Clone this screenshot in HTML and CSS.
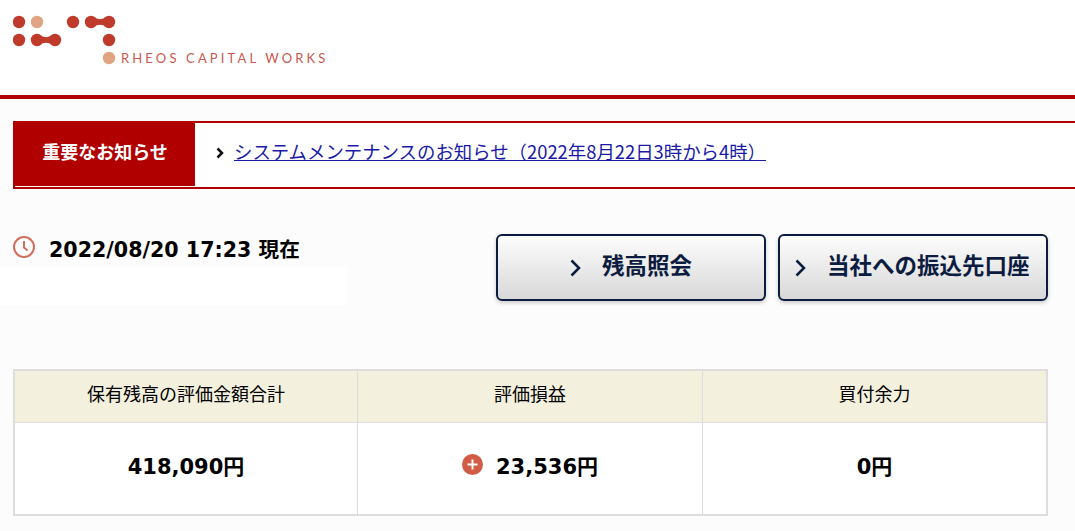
FILE: index.html
```html
<!DOCTYPE html>
<html lang="ja">
<head>
    <meta charset="UTF-8">
    <meta name="viewport" content="width=device-width, initial-scale=1.0">
    <title>RHEOS CAPITAL WORKS</title>
    <link rel="stylesheet" href="styles.css">
</head>
<body>

<header class="header">
    <div class="logo">
        <svg class="logo-mark" width="104" height="54" viewBox="0 0 104 54">
            <g fill="#c03a2b">
                <circle cx="6" cy="7" r="6.200"/>
                <circle cx="60" cy="7" r="6.200"/>
                <circle cx="78" cy="7" r="6.200"/>
                <circle cx="96" cy="7" r="6.200"/>
                <path d="M78 1q9 6.500 18 0v12q-9-6.500-18 0z"/>
                <circle cx="6" cy="25" r="6.200"/>
                <circle cx="24" cy="25" r="6.200"/>
                <circle cx="42" cy="25" r="6.200"/>
                <path d="M24 19q9 6.500 18 0v12q-9-6.500-18 0z"/>
                <circle cx="96" cy="25" r="6.200"/>
            </g>
            <circle cx="24" cy="7" r="6.200" fill="#e0a483"/>
            <circle cx="96" cy="43" r="6.200" fill="#e0a483"/>
        </svg>
        <span class="logo-text">RHEOS CAPITAL WORKS</span>
    </div>
</header>

<section class="notice">
    <h2 class="notice-label">重要なお知らせ</h2>
    <p class="notice-body">
        <svg class="notice-arrow" width="8" height="12" viewBox="0 0 8 12"><path d="M1.500 1.500 6 6l-4.500 4.500" fill="none" stroke="#111" stroke-width="2.500"/></svg>
        <a href="#">システムメンテナンスのお知らせ（2022年8月22日3時から4時）</a>
    </p>
</section>

<section class="status">
    <div class="status-left">
        <p class="time">
            <svg width="22" height="22" viewBox="0 0 22 22"><circle cx="11" cy="11" r="10" fill="none" stroke="#d2705f" stroke-width="2"/><path d="M11 5v6.500l3.500 3" fill="none" stroke="#d2705f" stroke-width="2"/></svg>
            <span>2022/08/20 17:23 現在</span>
        </p>
        <div class="status-blank"></div>
    </div>
    <div class="buttons">
        <a class="button button-center" href="#">
            <svg width="11" height="18" viewBox="0 0 11 18"><path d="M1.500 1.500 9 9l-7.500 7.500" fill="none" stroke="#0c1c40" stroke-width="2.500"/></svg>
            残高照会
        </a>
        <a class="button" href="#">
            <svg width="11" height="18" viewBox="0 0 11 18"><path d="M1.500 1.500 9 9l-7.500 7.500" fill="none" stroke="#0c1c40" stroke-width="2.500"/></svg>
            当社への振込先口座
        </a>
    </div>
</section>

<table class="summary">
    <tr>
        <th class="col-first">保有残高の評価金額合計</th>
        <th class="col-second">評価損益</th>
        <th>買付余力</th>
    </tr>
    <tr>
        <td>418,090円</td>
        <td>
            <span class="amount">
                <svg width="21" height="21" viewBox="0 0 21 21"><circle cx="10.500" cy="10.500" r="10.500" fill="#d15c46"/><path d="M5.500 10.500h10M10.500 5.500v10" stroke="#fff" stroke-width="2"/></svg>
                23,536円
            </span>
        </td>
        <td>0円</td>
    </tr>
</table>

</body>
</html>
```

FILE: styles.css
```css
body {
    margin: 0;
    background: #fcfcfc;
    color: #000;
    font-family: "DejaVu Sans", "Noto Sans CJK JP", sans-serif;
    overflow: hidden;
}
.header {
    height: 95px;
    background: #fff;
    border-bottom: 4px solid #b00000;
}
.logo {
    position: relative;
    padding: 15px 0 0 13px;
}
.logo-mark {
    display: block;
}
.logo-text {
    position: absolute;
    left: 121px;
    top: 50px;
    color: #c9584f;
    font-family: "Lato", sans-serif;
    font-size: 13px;
    letter-spacing: 3.150px;
    white-space: nowrap;
}
.notice {
    display: flex;
    height: 64px;
    margin: 22px 0 0 13px;
    background: #fff;
    border-top: 2px solid #b00000;
    border-bottom: 2px solid #b00000;
    border-left: 2px solid #b00000;
}
.notice-label {
    width: 180px;
    height: 63px;
    margin: 0;
    background: #b00000;
    color: #fff;
    font-family: "Noto Sans CJK JP", sans-serif;
    font-size: 18px;
    font-weight: 700;
    line-height: 56px;
    text-align: center;
}
.notice-body {
    display: flex;
    align-items: center;
    gap: 10px;
    margin: 0;
    padding: 0 0 9px 21px;
    font-family: "Noto Sans CJK JP", sans-serif;
    font-size: 18.400px;
}
.notice-arrow {
    margin-top: 5px;
}
.notice-body a {
    color: #1a1aa6;
}
.status {
    display: flex;
    justify-content: space-between;
    margin-top: 45px;
    padding-right: 27px;
}
.status-left {
    width: 347px;
}
.time {
    display: flex;
    align-items: center;
    gap: 14px;
    box-sizing: border-box;
    height: 32px;
    margin: 0;
    padding: 0 0 6px 13px;
    font-size: 20.600px;
    font-weight: 700;
}
.time span {
    margin-top: 1px;
}
.status-blank {
    height: 39px;
    background: #fff;
}
.buttons {
    display: flex;
    gap: 12px;
}
.button {
    display: flex;
    align-items: center;
    gap: 21px;
    box-sizing: border-box;
    width: 270px;
    height: 67px;
    padding: 0 0 8px 15px;
    border: 2px solid #0c1c40;
    border-radius: 6px;
    background: linear-gradient(#fdfdfd, #d8d8d8);
    box-shadow: 0 2px 4px rgba(0, 0, 0, 0.2);
    color: #0c1c40;
    font-family: "Noto Sans CJK JP", sans-serif;
    font-size: 22.500px;
    font-weight: 700;
    text-decoration: none;
}
.button svg {
    margin-top: 8px;
}
.button-center {
    justify-content: center;
    padding-left: 0;
}
.summary {
    box-sizing: border-box;
    width: 1035px;
    margin: 64px 0 0 13px;
    border-spacing: 0;
    border: 2px solid #ddd;
    background: #fff;
    table-layout: fixed;
}
.summary th,
.summary td {
    box-sizing: border-box;
    border-right: 1px solid #ddd;
    text-align: center;
}
.summary th:last-child,
.summary td:last-child {
    border-right: 0;
}
.summary th {
    height: 52px;
    padding: 0 0 8px;
    border-bottom: 1px solid #ddd;
    background: #f3f1de;
    font-family: "Noto Sans CJK JP", sans-serif;
    font-size: 18px;
    font-weight: 400;
}
.summary .col-first {
    width: 343px;
}
.summary .col-second {
    width: 345px;
}
.summary td {
    height: 91px;
    padding: 0 0 7px;
    font-size: 21px;
    font-weight: 700;
}
.amount {
    display: inline-flex;
    align-items: center;
    gap: 13px;
}
```
